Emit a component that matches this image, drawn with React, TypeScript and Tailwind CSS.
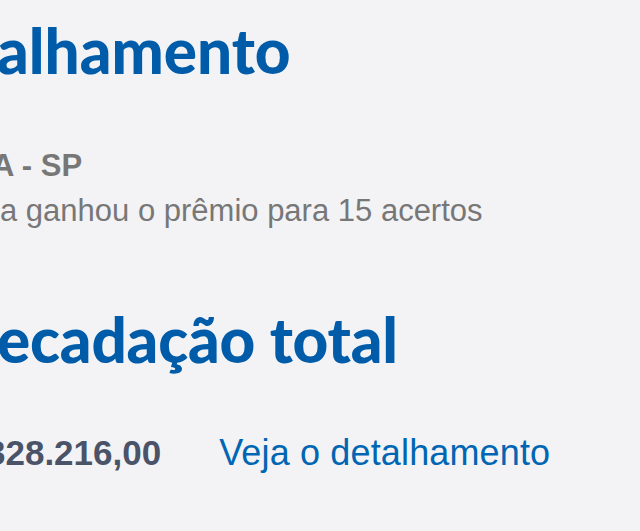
export default function App() {
  return (
    <div className="w-[640px] h-[531px] overflow-hidden bg-[#f3f3f5] font-['Liberation_Sans',Arial,sans-serif]">
      <div className="flex flex-col pt-[19px]">
        <h2 className="whitespace-nowrap text-[62px] leading-[62px] font-black text-[#005ca9] -ml-[3px] font-['Lato','Open_Sans',sans-serif]">
          alhamento
        </h2>
        <p className="mt-[69px] -ml-[8px] whitespace-nowrap text-[31px] leading-[31px] font-bold text-[#777777]">
          A - SP
        </p>
        <p className="mt-[14px] whitespace-nowrap text-[31px] leading-[31px] text-[#777777]">
          a ganhou o prêmio para 15 acertos
        </p>
        <h2 className="mt-[82px] whitespace-nowrap text-[62px] leading-[62px] font-black text-[#005ca9] -ml-[3px] tracking-[-0.2px] font-['Lato','Open_Sans',sans-serif]">
          ecadação total
        </h2>
        <div className="mt-[65px] flex items-baseline gap-[58px] whitespace-nowrap">
          <span className="text-[35px] leading-[36px] font-bold text-[#4a5368] -ml-[14px]">328.216,00</span>
          <a href="#" className="text-[36px] leading-[36px] text-[#0066b3] tracking-[0.15px]">Veja o detalhamento</a>
        </div>
      </div>
    </div>
  );
}
